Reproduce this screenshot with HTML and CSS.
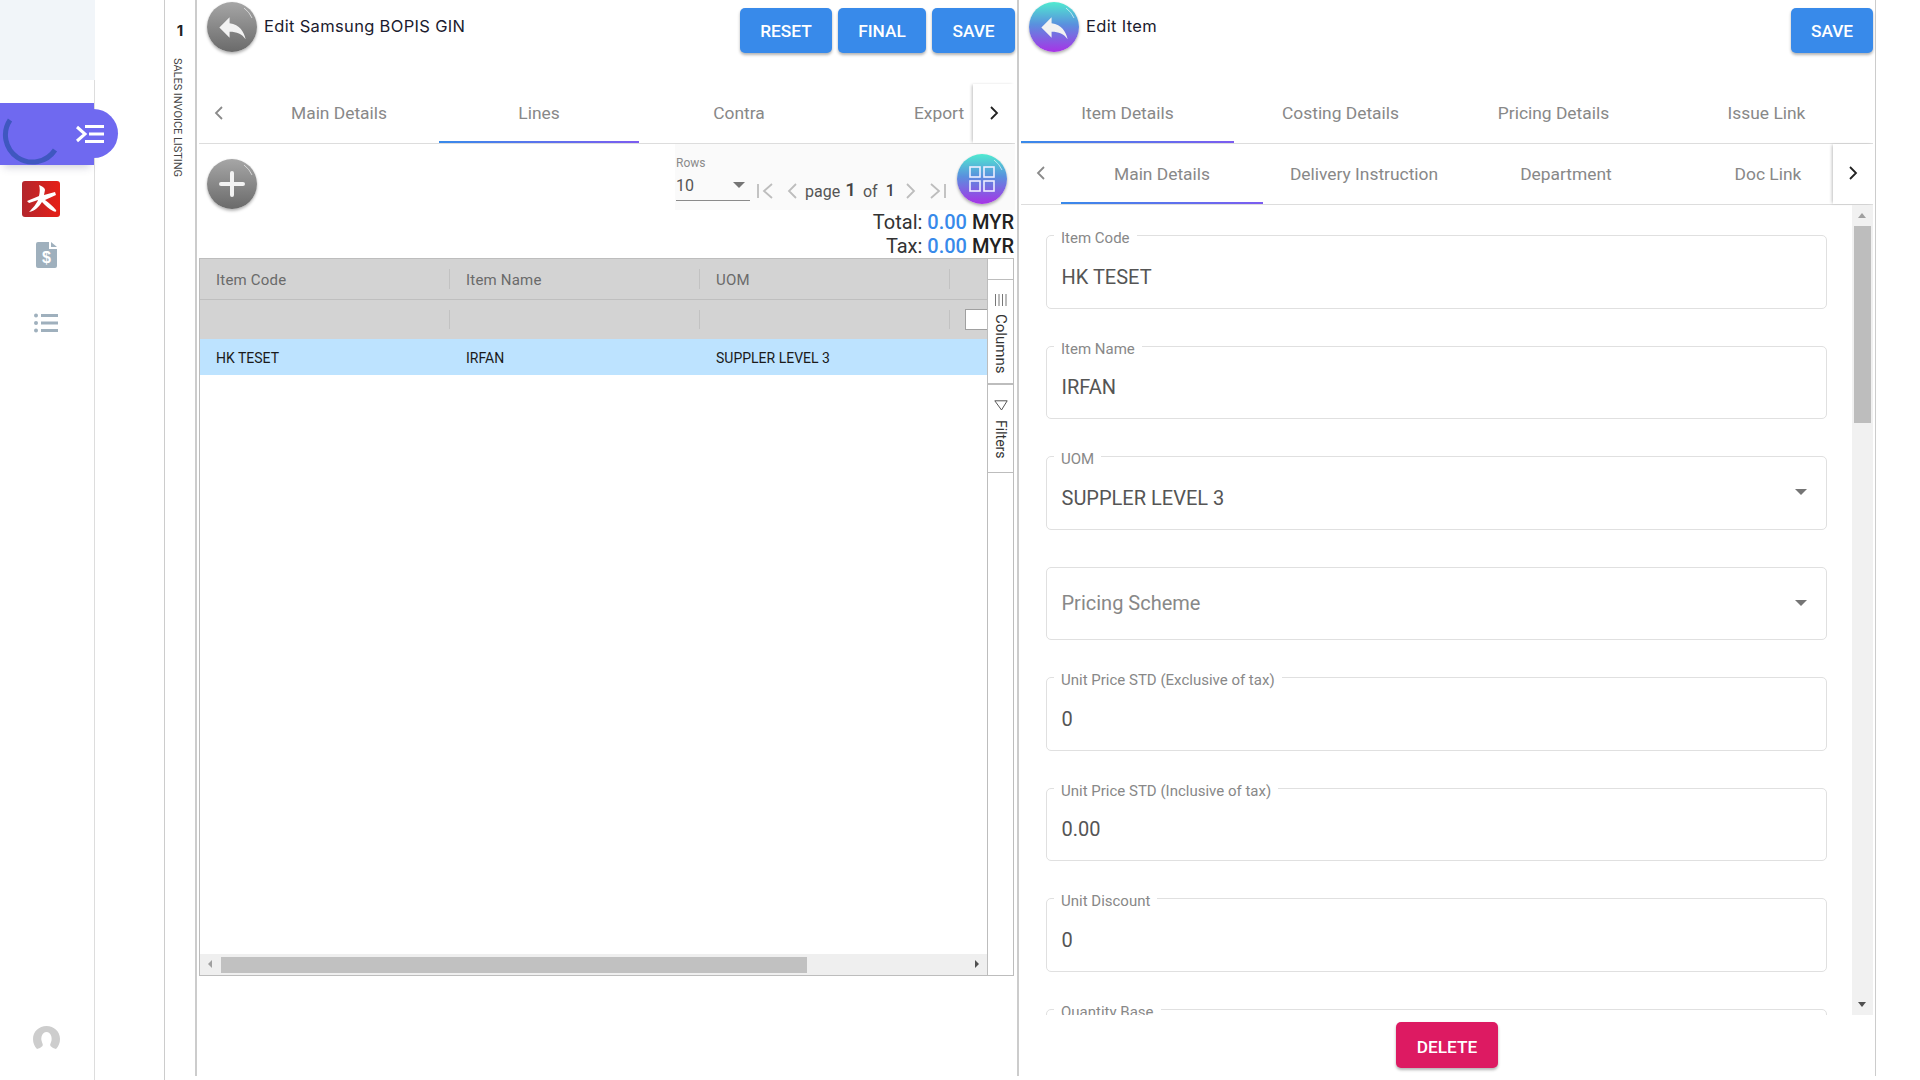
FILE: index.html
```html
<!DOCTYPE html>
<html lang="en">
<head>
<meta charset="utf-8">
<title>Edit Samsung BOPIS GIN</title>
<link rel="stylesheet" href="styles.css">
</head>
<body>
<div class="app">
  <aside class="sidebar">
    <div class="brand-box"></div>
    <div class="menu-bar">
      <svg class="spinner" width="62" height="62" viewBox="0 0 62 62"><path d="M10 17A27 27 0 1 0 55 47" fill="none" stroke="#3f57c0" stroke-width="5"/></svg>
      <div class="menu-toggle">
        <svg width="28" height="18" viewBox="0 0 28 18"><path d="M1 2l8 7-8 7" fill="none" stroke="#fff" stroke-width="3"/><path d="M9 1.500h19M13 9h15M9 16.500h19" stroke="#fff" stroke-width="3"/></svg>
      </div>
    </div>
    <svg class="logo" width="38" height="36" viewBox="0 0 38 36">
      <defs><linearGradient id="lg" x1="0" x2="1" y1="0" y2="0"><stop offset="0" stop-color="#b3262c"/><stop offset="1" stop-color="#e61f17"/></linearGradient></defs>
      <rect width="38" height="36" rx="3" fill="url(#lg)"/>
      <path d="M17 4C20 5 23 7 23 9L22 14L33 11L34 14L23 19C27 22 31 25 34 29C35 31 33 31 31 30C27 28 23 24 20 21C17 26 13 30 7 31C11 27 15 22 16 19L7 22L5 20L17 15C18 11 18 7 17 4z" fill="#fff"/>
    </svg>
    <svg class="doc-icon" width="21" height="26" viewBox="0 0 21 26">
      <path d="M2 0h11v7h8v17a2 2 0 0 1-2 2H2a2 2 0 0 1-2-2V2a2 2 0 0 1 2-2z" fill="#9fb0bd"/><path d="M15 0l6 5h-6z" fill="#9fb0bd"/>
      <text x="10.500" y="21" text-anchor="middle" class="doc-sign">$</text>
    </svg>
    <svg class="list-icon" width="24" height="20" viewBox="0 0 24 20">
      <g fill="#9fb0bd"><circle cx="2" cy="2.500" r="2"/><circle cx="2" cy="10" r="2"/><circle cx="2" cy="17.500" r="2"/><rect x="7" y="1" width="17" height="3"/><rect x="7" y="8.500" width="17" height="3"/><rect x="7" y="16" width="17" height="3"/></g>
    </svg>
    <svg class="avatar" width="27" height="23" viewBox="0 0 27 23">
      <path d="M13.500 0C6 0 0 5.500 0 13c0 4 1.500 7.500 4 10 2-.5 4-1.500 5.500-3 1-1.500-.5-3-1-5.500-.6-3 .5-8.500 5-8.500s5.600 5.500 5 8.500c-.5 2.500-2 4-1 5.500 1.500 1.500 3.500 2.500 5.500 3 2.500-2.500 4-6 4-10C27 5.500 21 0 13.500 0z" fill="#cdcdcd"/>
    </svg>
  </aside>
  <div class="blank-col"></div>
  <div class="listing-col">
    <span class="listing-count">1</span>
    <span class="listing-label">SALES INVOICE LISTING</span>
  </div>

  <section class="panel panel-left">
    <header class="panel-head">
      <button class="fab fab-grey fab-back">
        <svg class="shine" width="50" height="50" viewBox="0 0 50 50"><path d="M37 6a24 24 0 0 1 8 10" fill="none" stroke="#fff" stroke-opacity=".6"/></svg>
        <svg width="35" height="35" viewBox="0 0 24 24"><path d="M10 9V5l-7 7 7 7v-4.100c5 0 8.500 1.600 11 5.100-1-5-4-10-11-11z" fill="#f2f2f2"/></svg>
      </button>
      <h1 class="panel-title">Edit Samsung BOPIS GIN</h1>
      <div class="actions">
        <button class="btn btn-reset">RESET</button>
        <button class="btn btn-final">FINAL</button>
        <button class="btn btn-save-l">SAVE</button>
      </div>
    </header>

    <nav class="tabs tabs-main">
      <span class="tab-prev"><svg width="12" height="16" viewBox="0 0 12 16"><path d="M9 2L3 8l6 6" fill="none" stroke="#8a8a8a" stroke-width="1.800"/></svg></span>
      <div class="tab-strip">
        <a class="tab tab-200">Main Details</a>
        <a class="tab tab-200 active">Lines</a>
        <a class="tab tab-200">Contra</a>
        <a class="tab tab-200">Export</a>
      </div>
      <span class="tab-next"><svg width="12" height="16" viewBox="0 0 12 16"><path d="M3 2l6 6-6 6" fill="none" stroke="#222" stroke-width="1.800"/></svg></span>
    </nav>

    <div class="toolbar">
      <button class="fab fab-grey fab-add">
        <svg class="shine" width="50" height="50" viewBox="0 0 50 50"><path d="M37 6a24 24 0 0 1 8 10" fill="none" stroke="#fff" stroke-opacity=".6"/></svg>
        <svg width="26" height="26" viewBox="0 0 26 26"><path d="M13 2v22M2 13h22" stroke="#f2f2f2" stroke-width="4" stroke-linecap="round"/></svg>
      </button>
      <div class="pager">
        <div class="rows">
          <span class="rows-label">Rows</span>
          <div class="rows-select"><span>10</span><i class="caret"></i></div>
        </div>
        <svg class="pg pg-first" width="16" height="18" viewBox="0 0 16 18"><path d="M1 2v14M15 2L7 9l8 7" fill="none" stroke="#bdbdbd" stroke-width="1.800"/></svg>
        <svg class="pg pg-prev" width="10" height="18" viewBox="0 0 10 18"><path d="M9 2L2 9l7 7" fill="none" stroke="#bdbdbd" stroke-width="1.800"/></svg>
        <span class="pg-text pg-page">page</span><b class="pg-num pg-cur">1</b>
        <span class="pg-text pg-of">of</span><b class="pg-num pg-total">1</b>
        <svg class="pg pg-next" width="10" height="18" viewBox="0 0 10 18"><path d="M1 2l7 7-7 7" fill="none" stroke="#bdbdbd" stroke-width="1.800"/></svg>
        <svg class="pg pg-last" width="16" height="18" viewBox="0 0 16 18"><path d="M15 2v14M1 2l8 7-8 7" fill="none" stroke="#bdbdbd" stroke-width="1.800"/></svg>
        <button class="fab fab-colour fab-grid">
          <svg class="shine" width="50" height="50" viewBox="0 0 50 50"><path d="M37 6a24 24 0 0 1 8 10" fill="none" stroke="#fff" stroke-opacity=".6"/></svg>
          <svg width="26" height="26" viewBox="0 0 26 26"><g fill="none" stroke="#eef" stroke-width="1.600"><rect x="1" y="1" width="10" height="10"/><rect x="15" y="1" width="10" height="10"/><rect x="1" y="15" width="10" height="10"/><rect x="15" y="15" width="10" height="10"/></g></svg>
        </button>
      </div>
    </div>

    <div class="summary">
      <div>Total: <span class="amount">0.00</span> <span class="cur">MYR</span></div>
      <div>Tax: <span class="amount">0.00</span> <span class="cur">MYR</span></div>
    </div>

    <div class="grid">
      <div class="grid-main">
        <div class="grid-row grid-head">
          <div class="cell">Item Code</div><div class="cell">Item Name</div><div class="cell">UOM</div>
        </div>
        <div class="grid-row grid-filter">
          <div class="cell"></div><div class="cell"></div><div class="cell"></div><i class="check"></i>
        </div>
        <div class="grid-row grid-data">
          <div class="cell">HK TESET</div><div class="cell">IRFAN</div><div class="cell">SUPPLER LEVEL 3</div>
        </div>
        <div class="grid-body"></div>
        <div class="hscroll">
          <i class="arr arr-left"></i>
          <div class="hthumb"></div>
          <i class="arr arr-right"></i>
        </div>
      </div>
      <div class="grid-side">
        <div class="side-tab side-columns">
          <svg width="14" height="12" viewBox="0 0 14 12"><path d="M1.500 0v12M5 0v12M8.500 0v12M12 0v12" stroke="#777"/></svg>
          <span class="side-label">Columns</span>
        </div>
        <div class="side-tab side-filters">
          <svg width="14" height="11" viewBox="0 0 14 11"><path d="M.8.800h12.400L7.500 10z" fill="none" stroke="#555"/></svg>
          <span class="side-label">Filters</span>
        </div>
      </div>
    </div>
  </section>

  <section class="panel panel-right">
    <header class="panel-head">
      <button class="fab fab-colour fab-back">
        <svg class="shine" width="50" height="50" viewBox="0 0 50 50"><path d="M37 6a24 24 0 0 1 8 10" fill="none" stroke="#fff" stroke-opacity=".6"/></svg>
        <svg width="35" height="35" viewBox="0 0 24 24"><path d="M10 9V5l-7 7 7 7v-4.100c5 0 8.500 1.600 11 5.100-1-5-4-10-11-11z" fill="#f2f2f2"/></svg>
      </button>
      <h1 class="panel-title">Edit Item</h1>
      <div class="actions">
        <button class="btn btn-save-r">SAVE</button>
      </div>
    </header>

    <nav class="tabs tabs-item">
      <a class="tab tab-213 active">Item Details</a>
      <a class="tab tab-213">Costing Details</a>
      <a class="tab tab-213">Pricing Details</a>
      <a class="tab tab-213">Issue Link</a>
    </nav>

    <nav class="tabs tabs-sub">
      <span class="tab-prev"><svg width="12" height="16" viewBox="0 0 12 16"><path d="M9 2L3 8l6 6" fill="none" stroke="#8a8a8a" stroke-width="1.800"/></svg></span>
      <div class="tab-strip">
        <a class="tab tab-202 active">Main Details</a>
        <a class="tab tab-202">Delivery Instruction</a>
        <a class="tab tab-202">Department</a>
        <a class="tab tab-202">Doc Link</a>
      </div>
      <span class="tab-next"><svg width="12" height="16" viewBox="0 0 12 16"><path d="M3 2l6 6-6 6" fill="none" stroke="#222" stroke-width="1.800"/></svg></span>
    </nav>

    <div class="form-area">
      <div class="form-fields">
        <div class="field"><span class="field-label">Item Code</span><span class="field-value">HK TESET</span></div>
        <div class="field"><span class="field-label">Item Name</span><span class="field-value">IRFAN</span></div>
        <div class="field"><span class="field-label">UOM</span><span class="field-value">SUPPLER LEVEL 3</span><i class="field-caret"></i></div>
        <div class="field field-empty"><span class="field-placeholder">Pricing Scheme</span><i class="field-caret"></i></div>
        <div class="field"><span class="field-label">Unit Price STD (Exclusive of tax)</span><span class="field-value">0</span></div>
        <div class="field"><span class="field-label">Unit Price STD (Inclusive of tax)</span><span class="field-value">0.00</span></div>
        <div class="field"><span class="field-label">Unit Discount</span><span class="field-value">0</span></div>
        <div class="field"><span class="field-label">Quantity Base</span></div>
      </div>
      <div class="vscroll">
        <i class="arr arr-up"></i>
        <div class="vthumb"></div>
        <i class="arr arr-down"></i>
      </div>
    </div>

    <footer class="panel-foot">
      <button class="btn btn-delete">DELETE</button>
    </footer>
  </section>
</div>
</body>
</html>
```

FILE: styles.css
```css
* { box-sizing: border-box; }
html, body { margin: 0; height: 100%; background: #fff; overflow: hidden; }
body { font-family: Roboto, "Liberation Sans", sans-serif; color: #212121; }
button { font-family: inherit; border: 0; padding: 0; cursor: pointer; }

.app { display: flex; width: 1920px; height: 1080px; align-items: flex-start; }

/* sidebar */
.sidebar { width: 95px; height: 1080px; border-right: 1px solid #ddd; display: flex; flex-direction: column; align-items: flex-start; position: relative; flex: none; }
.brand-box { width: 95px; height: 80px; margin-right: -1px; background: #f1f5f9; flex: none; }
.menu-bar { position: relative; width: 94px; height: 62px; margin-top: 23px; background: #6f69f0; box-shadow: 0 6px 8px -4px rgba(60,60,100,.25); flex: none; }
.spinner { position: absolute; left: 0; top: 0; overflow: hidden; }
.menu-toggle { position: absolute; left: 70px; top: 6px; width: 48px; height: 49px; border-radius: 0 25px 25px 0; background: #6f69f0; display: flex; align-items: center; padding-left: 6px; }
.logo { margin: 16px 0 0 22px; flex: none; }
.doc-icon { margin: 25px 0 0 36px; flex: none; }
.doc-sign { font: 700 16px "Liberation Sans", sans-serif; fill: #fff; }
.list-icon { margin: 45px 0 0 34px; flex: none; }
.avatar { margin: 693px 0 0 33px; flex: none; }

.blank-col { width: 70px; height: 1080px; border-right: 1px solid #ccc; flex: none; }

.listing-col { width: 30px; height: 1076px; flex: none; display: flex; flex-direction: column; align-items: center; }
.listing-count { font: 700 15px/1 Inter, sans-serif; margin: 23px 0 0 0; color: #222; }
.listing-label { writing-mode: vertical-rl; font-size: 11px; line-height: 12px; margin: 20px 0 0 -6px; color: #444; white-space: nowrap; letter-spacing: -.05px; }

/* panels */
.panel { height: 1076px; display: flex; flex-direction: column; flex: none; }
.panel-left { width: 824px; border-left: 2px solid #ccc; border-right: 2px solid #ccc; padding: 0 2px; }
.panel-right { width: 857px; border-right: 1px solid #ccc; padding: 0 2px 0 2px; }

.panel-head { height: 84px; display: flex; align-items: flex-start; flex: none; }
.panel-title { margin: 15px 0 0 7px; font: 400 16.500px/22px Inter, sans-serif; color: #1b1b2e; letter-spacing: .33px; white-space: nowrap; }
.panel-left .fab-back { margin: 2px 0 0 8px; }
.panel-right .fab-back { margin: 2px 0 0 8px; }
.actions { margin-left: auto; display: flex; gap: 6px; padding-top: 8px; }

.fab { position: relative; width: 50px; height: 50px; border-radius: 50%; display: flex; align-items: center; justify-content: center; flex: none; box-shadow: 0 2px 3px rgba(0,0,0,.28), 0 0 0 1px rgba(0,0,0,.02); }
.fab-grey { background: linear-gradient(#a6a6a6, #6a6a6a); }
.fab-colour { background: linear-gradient(#4fead0 0%, #5a90de 45%, #a733e6 100%); }
.shine { position: absolute; left: 0; top: 0; }

.btn { height: 45px; border-radius: 5px; background: #388aea; color: #fff; font-size: 17.300px; font-weight: 500; box-shadow: 0 2px 3px rgba(0,0,0,.3); text-align: center; }
.btn-reset { width: 92px; }
.btn-final { width: 88px; }
.btn-save-l { width: 83px; }
.btn-save-r { width: 82px; }
.btn-delete { width: 102px; height: 46px; padding-top: 3px; background: #dd1a62; }

/* tabs */
.tabs { display: flex; height: 60px; border-bottom: 1px solid #ddd; flex: none; }
.tabs-sub { height: 61px; }
.tab-prev { width: 40px; display: flex; align-items: center; justify-content: center; flex: none; padding-bottom: 2px; }
.tab-next { width: 42px; display: flex; align-items: center; justify-content: center; flex: none; box-shadow: -2px 0 3px -1px rgba(0,0,0,.25); padding-bottom: 2px; }
.tabs-sub .tab-next { width: 40px; }
.tab-strip { display: flex; flex: 1; overflow: hidden; }
.tab { display: flex; align-items: center; justify-content: center; flex: none; height: 59px; padding-bottom: 2px; font-size: 17.400px; color: #888; position: relative; white-space: nowrap; }
.tab.active::after { content: ""; position: absolute; left: 0; right: 0; bottom: 0; height: 2px; background: linear-gradient(90deg, #388aea, #7c5cf0); }
.tabs-sub .tab { height: 60px; padding-bottom: 0; }
.tab-200 { width: 200px; }
.tab-213 { width: 213px; }
.tab-202 { width: 202px; }

/* toolbar */
.toolbar { height: 66px; display: flex; align-items: flex-start; flex: none; }
.fab-add { margin: 15px 0 0 8px; }
.pager { margin-left: auto; width: 340px; height: 66px; background: #fafafa; display: flex; align-items: flex-start; flex: none; }
.rows { margin-left: 1px; width: 74px; flex: none; }
.rows-label { display: block; font-size: 12px; line-height: 14px; color: #8a8a8a; margin-top: 12px; }
.rows-select { height: 31px; border-bottom: 1px solid #8a8a8a; display: flex; justify-content: space-between; align-items: flex-start; font-size: 16px; color: #555; padding: 6px 5px 0 0; line-height: 20px; }
.caret { width: 0; height: 0; border: 6px solid transparent; border-top: 6px solid #757575; border-bottom: 0; margin-top: 6px; }
.pg { margin-top: 38px; flex: none; }
.pg-first { margin-left: 7px; }
.pg-prev { margin-left: 14px; }
.pg-next { margin-left: 11px; }
.pg-last { margin-left: 14px; }
.pg-text { font-size: 16px; line-height: 20px; margin-top: 38px; color: #555; }
.pg-num { line-height: 20px; margin-top: 37px; color: #444; font-weight: 500; font-size: 16px; }
.pg-page { margin-left: 8px; }
.pg-cur { margin-left: 5px; font-size: 19px; margin-top: 36px; }
.pg-of { margin-left: 7px; }
.pg-total { margin-left: 8px; }
.fab-grid { margin: 10px 0 0 11px; }

.summary { height: 48px; text-align: right; font-size: 20px; line-height: 24px; padding-right: 1px; flex: none; color: #333; }
.amount { color: #388aea; font-weight: 500; }
.cur { font-weight: 500; color: #222; }

/* grid */
.grid { height: 718px; width: 815px; display: flex; border: 1px solid #bdbdbd; flex: none; }
.grid-main { flex: 1; min-width: 0; display: flex; flex-direction: column; }
.grid-row { display: flex; flex: none; position: relative; }
.cell { width: 250px; padding-left: 16px; display: flex; align-items: center; font-size: 14px; position: relative; flex: none; }
.grid-head { height: 41px; background: #d3d3d3; border-bottom: 1px solid #bfbfbf; color: #6a6a6a; }
.grid-head .cell { font-size: 15px; letter-spacing: .2px; padding-top: 1px; }
.grid-filter { height: 39px; background: #d3d3d3; }
.grid-head .cell::after, .grid-filter .cell::after { content: ""; position: absolute; right: 0; top: 10px; bottom: 10px; width: 1px; background: #c2c2c2; }
.check { position: absolute; right: 0; top: 9px; width: 22px; height: 21px; background: #fff; border: 1px solid #a0a0a0; border-right: 0; }
.grid-data { height: 36px; background: #bde3ff; color: #1a1a1a; }
.grid-data .cell { padding-top: 1px; }
.grid-body { flex: 1; }
.hscroll { height: 21px; background: #efefef; position: relative; display: flex; align-items: center; padding-left: 21px; flex: none; }
.hthumb { width: 586px; height: 16px; background: #c1c1c1; }
.arr { width: 0; height: 0; border: 4px solid transparent; position: absolute; display: block; }
.arr-left { left: 8px; top: 6px; border-right: 4px solid #a0a0a0; border-left: 0; }
.arr-right { right: 8px; top: 6px; border-left: 4px solid #505050; border-right: 0; }
.grid-side { width: 26px; border-left: 1px solid #bdbdbd; padding-top: 20px; flex: none; }
.side-tab { border-top: 1px solid #bdbdbd; display: flex; flex-direction: column; align-items: center; font-size: 14px; color: #333; }
.side-columns { height: 104px; padding-top: 14px; }
.side-filters { height: 90px; border-top: 2px solid #bdbdbd; border-bottom: 1px solid #bdbdbd; padding-top: 15px; }
.side-label { writing-mode: vertical-rl; margin-top: 8px; line-height: 16px; }
.side-columns .side-label { font-size: 15px; }
.side-filters .side-label { margin-top: 9px; }

/* form */
.form-area { height: 810px; display: flex; overflow: hidden; flex: none; }
.form-fields { flex: 1; min-width: 0; padding: 30px 25px 0 25px; }
.field { position: relative; height: 73.500px; margin-bottom: 37px; border: 1px solid #e0e0e0; border-radius: 5px; display: flex; align-items: center; padding: 10px 12px 0 14.500px; }
.field-empty { padding-top: 0; padding-bottom: 1px; }
.field-label { position: absolute; left: 7px; top: -6px; padding: 0 7px; background: #fff; font-size: 15px; line-height: 16px; color: #888; white-space: nowrap; }
.field-value { font-size: 20px; color: #555; line-height: 24px; }
.field-placeholder { font-size: 20px; color: #888; line-height: 24px; }
.field-caret { position: absolute; right: 19px; top: 32px; width: 0; height: 0; border: 6px solid transparent; border-top: 6px solid #757575; border-bottom: 0; }
.vscroll { width: 21px; height: 810px; background: #f1f1f1; position: relative; padding: 21px 2px 0; flex: none; }
.vthumb { height: 197px; background: #bdbdbd; }
.arr-up { left: 6px; top: 8px; border-bottom: 5px solid #a0a0a0; border-top: 0; border-left-width: 4.500px; border-right-width: 4.500px; }
.arr-down { left: 6px; bottom: 8px; border-top: 5px solid #505050; border-bottom: 0; border-left-width: 4.500px; border-right-width: 4.500px; }
.panel-foot { flex: 1; display: flex; justify-content: center; align-items: flex-start; padding-top: 7px; }
```
